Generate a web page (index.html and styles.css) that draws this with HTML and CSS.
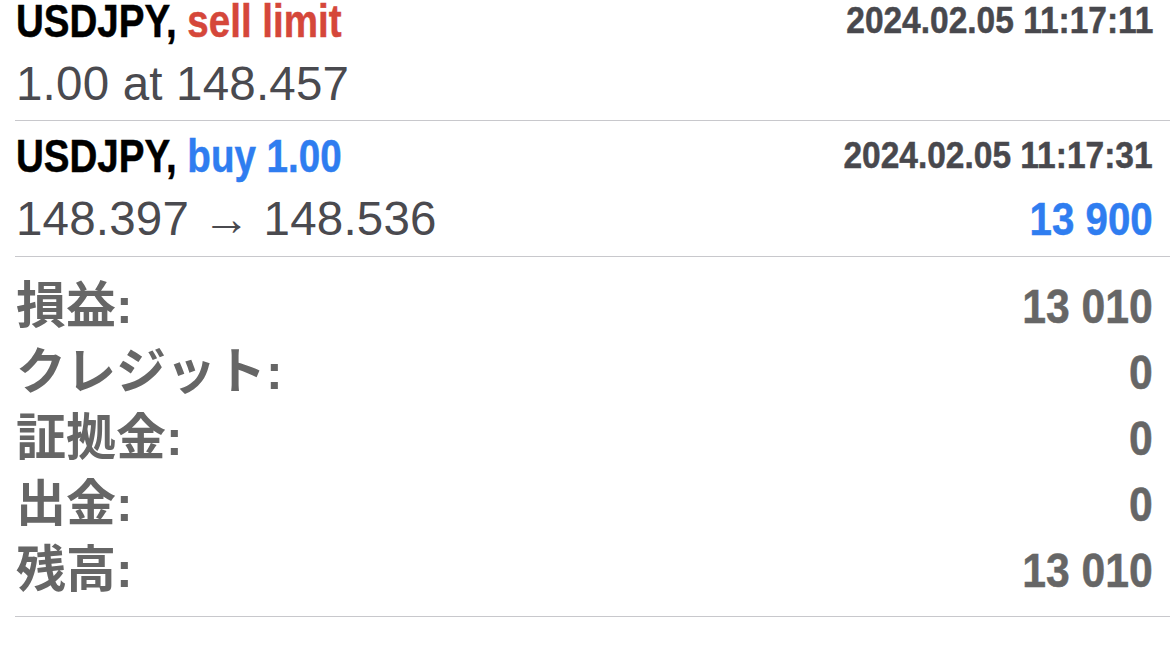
FILE: index.html
```html
<!DOCTYPE html>
<html lang="ja">
<head>
    <meta charset="UTF-8">
    <meta name="viewport" content="width=device-width, initial-scale=1.0">
    <title>履歴</title>
    <link rel="stylesheet" href="styles.css">
</head>
<body>

<div class="list">
    <div class="trade first">
        <div class="head">
            <span class="symbol">USDJPY, <span class="sell">sell limit</span></span>
            <span class="time">2024.02.05 11:17:11</span>
        </div>
        <div class="info">
            <span class="price">1.00 at 148.457</span>
        </div>
    </div>

    <div class="trade">
        <div class="head">
            <span class="symbol">USDJPY, <span class="buy">buy 1.00</span></span>
            <span class="time">2024.02.05 11:17:31</span>
        </div>
        <div class="info">
            <span class="price">148.397 → 148.536</span>
            <span class="profit">13 900</span>
        </div>
    </div>

    <div class="summary">
        <div class="row"><span class="label">損益:</span><span class="value">13 010</span></div>
        <div class="row"><span class="label">クレジット:</span><span class="value">0</span></div>
        <div class="row"><span class="label">証拠金:</span><span class="value">0</span></div>
        <div class="row"><span class="label">出金:</span><span class="value">0</span></div>
        <div class="row"><span class="label">残高:</span><span class="value">13 010</span></div>
    </div>
</div>

</body>
</html>
```

FILE: styles.css
```css
body {
    margin: 0;
    background: #ffffff;
    font-family: "Liberation Sans", Arial, sans-serif;
}
.list {
    margin-left: 15px;
}
.trade {
    padding: 7px 17px 9px 1px;
    border-bottom: 1px solid #c8c8cc;
}
.trade.first {
    padding-top: 0;
    padding-bottom: 8px;
}
.head {
    display: flex;
    justify-content: space-between;
    align-items: center;
    line-height: 56px;
}
.first .head {
    line-height: 42px;
}
.info {
    display: flex;
    justify-content: space-between;
    align-items: baseline;
    line-height: 56px;
    margin-top: 7px;
}
.first .info {
    margin-top: 14px;
}

/* no condensed face installed, so squeeze the bold one */
.symbol, .time, .profit, .value {
    display: inline-block;
    font-weight: 700;
    white-space: nowrap;
    -webkit-text-stroke: 0.5px currentColor;
}
.symbol {
    font-size: 47px;
    color: #000000;
    transform: scaleX(0.82);
    transform-origin: left center;
}
.sell {
    color: #d5473a;
}
.buy {
    color: #2f7df0;
}
.time {
    font-size: 37px;
    color: #48484d;
    transform: scaleX(0.905);
    transform-origin: right center;
}
.price {
    font-size: 47.5px;
    letter-spacing: 0.2px;
    color: #4a4a4f;
    white-space: nowrap;
}
.profit {
    font-size: 46px;
    color: #2f7df0;
    transform: scaleX(0.875);
    transform-origin: right center;
}
.summary {
    padding: 16px 17px 13px 1px;
    border-bottom: 1px solid #c8c8cc;
}
.row {
    display: flex;
    justify-content: space-between;
    align-items: baseline;
    height: 66px;
    line-height: 66px;
    color: #666666;
}
.label {
    font-family: "Liberation Sans", "Noto Sans CJK JP", sans-serif;
    font-weight: 700;
    font-size: 50px;
}
.value {
    font-size: 48px;
    transform: scaleX(0.89);
    transform-origin: right center;
}
```
